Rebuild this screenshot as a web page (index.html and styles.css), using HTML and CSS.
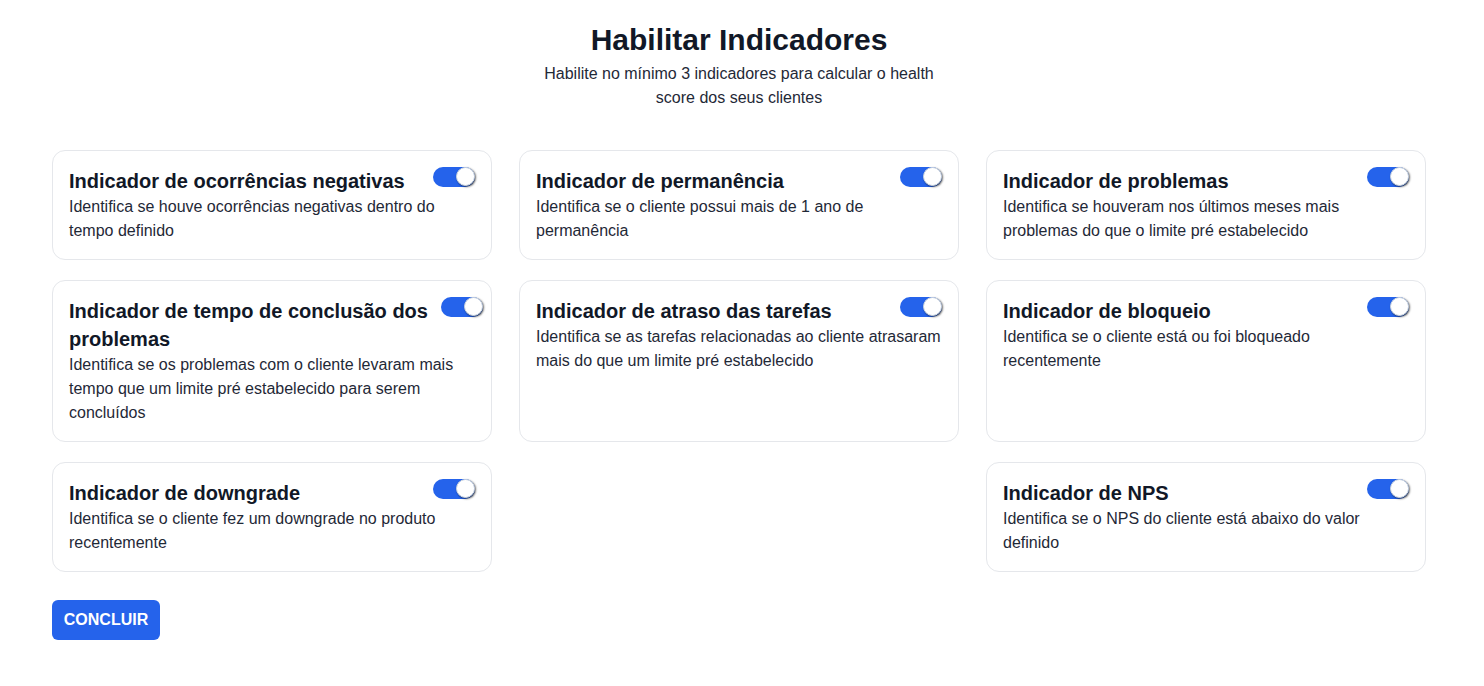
FILE: index.html
```html
<!DOCTYPE html>
<html lang="pt-BR">
<head>
<meta charset="utf-8">
<title>Habilitar Indicadores</title>
<link rel="stylesheet" href="styles.css">
</head>
<body>
<main class="page">
  <header class="intro">
    <h1 class="intro__title">Habilitar Indicadores</h1>
    <p class="intro__text">Habilite no mínimo 3 indicadores para calcular o health score dos seus clientes</p>
  </header>

  <section class="grid">
    <div class="card">
      <div class="card__head">
        <h2 class="card__title">Indicador de ocorrências negativas</h2>
        <span class="toggle"><span class="toggle__knob"></span></span>
      </div>
      <p class="card__text">Identifica se houve ocorrências negativas dentro do tempo definido</p>
    </div>
    <div class="card">
      <div class="card__head">
        <h2 class="card__title">Indicador de permanência</h2>
        <span class="toggle"><span class="toggle__knob"></span></span>
      </div>
      <p class="card__text">Identifica se o cliente possui mais de 1 ano de permanência</p>
    </div>
    <div class="card">
      <div class="card__head">
        <h2 class="card__title">Indicador de problemas</h2>
        <span class="toggle"><span class="toggle__knob"></span></span>
      </div>
      <p class="card__text">Identifica se houveram nos últimos meses mais problemas do que o limite pré estabelecido</p>
    </div>

    <div class="card">
      <div class="card__head">
        <h2 class="card__title">Indicador de tempo de conclusão dos problemas</h2>
        <span class="toggle toggle--pushed"><span class="toggle__knob"></span></span>
      </div>
      <p class="card__text">Identifica se os problemas com o cliente levaram mais tempo que um limite pré estabelecido para serem concluídos</p>
    </div>
    <div class="card">
      <div class="card__head">
        <h2 class="card__title">Indicador de atraso das tarefas</h2>
        <span class="toggle"><span class="toggle__knob"></span></span>
      </div>
      <p class="card__text">Identifica se as tarefas relacionadas ao cliente atrasaram mais do que um limite pré estabelecido</p>
    </div>
    <div class="card">
      <div class="card__head">
        <h2 class="card__title">Indicador de bloqueio</h2>
        <span class="toggle"><span class="toggle__knob"></span></span>
      </div>
      <p class="card__text">Identifica se o cliente está ou foi bloqueado recentemente</p>
    </div>

    <div class="card">
      <div class="card__head">
        <h2 class="card__title">Indicador de downgrade</h2>
        <span class="toggle"><span class="toggle__knob"></span></span>
      </div>
      <p class="card__text">Identifica se o cliente fez um downgrade no produto recentemente</p>
    </div>
    <div class="grid__empty"></div>
    <div class="card">
      <div class="card__head">
        <h2 class="card__title">Indicador de NPS</h2>
        <span class="toggle"><span class="toggle__knob"></span></span>
      </div>
      <p class="card__text">Identifica se o NPS do cliente está abaixo do valor definido</p>
    </div>
  </section>

  <button class="btn" type="button">CONCLUIR</button>
</main>
</body>
</html>
```

FILE: styles.css
```css
* { box-sizing: border-box; }

html, body {
  margin: 0;
  padding: 0;
  background: #ffffff;
}

body {
  font-family: "Liberation Sans", Arial, sans-serif;
  color: #111827;
}

.page {
  width: 1374px;
  margin-left: 52px;
  padding-top: 22px;
}

.intro {
  display: flex;
  flex-direction: column;
  align-items: center;
  text-align: center;
}

.intro__title {
  margin: 0;
  font-size: 30px;
  line-height: 36px;
  font-weight: 700;
  color: #111827;
}

.intro__text {
  margin: 4px 0 0;
  max-width: 400px;
  font-size: 16px;
  line-height: 24px;
  color: #1f2937;
}

.grid {
  margin-top: 40px;
  display: grid;
  grid-template-columns: repeat(3, 440px);
  column-gap: 27px;
  row-gap: 20px;
}

.card {
  border: 1px solid #e5e7eb;
  border-radius: 13px;
  padding: 16px;
  background: #fff;
}

.card__head {
  display: flex;
  justify-content: space-between;
  align-items: flex-start;
  gap: 6px;
}

.card__title {
  margin: 0;
  font-size: 20px;
  line-height: 28px;
  font-weight: 700;
  color: #111827;
}

.card__text {
  margin: 0;
  font-size: 16px;
  line-height: 24px;
  color: #1f2937;
}

.toggle {
  position: relative;
  flex: 0 0 42px;
  width: 42px;
  height: 20px;
  border-radius: 10px;
  background: #2563eb;
}

.toggle--pushed {
  margin-right: -8px;
}

.toggle__knob {
  position: absolute;
  top: 0;
  right: 0;
  width: 19px;
  height: 19px;
  border-radius: 50%;
  background: #ffffff;
  border: 1px solid #cbd5e1;
  box-shadow: 1px 1px 2px rgba(0, 0, 0, 0.6);
}

.btn {
  margin-top: 28px;
  width: 108px;
  height: 40px;
  border: 0;
  border-radius: 6px;
  background: #2563eb;
  color: #ffffff;
  font-family: "Liberation Sans", Arial, sans-serif;
  font-size: 16px;
  font-weight: 700;
  padding: 0;
}
```
